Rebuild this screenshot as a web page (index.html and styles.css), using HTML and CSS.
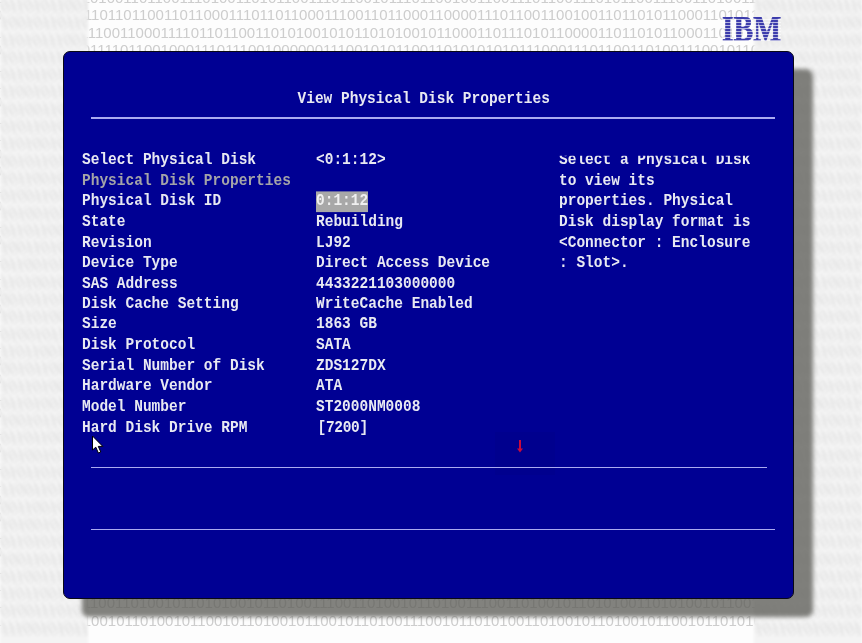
FILE: index.html
```html
<!DOCTYPE html>
<html lang="en">
<head>
<meta charset="utf-8">
<title>View Physical Disk Properties</title>
<link rel="stylesheet" href="styles.css">
</head>
<body>
<div class="screen">
<div class="binary">0110101100111010011011001110100110101100111011001011101100100110011101100111010110011100110100111001
1001011011001101101100110110001110110110001110011011000110000111011001100100110110101100011010110011
1101011100111110011000111101101100110101001010110101001011000110111010110000110110101100011010110100
1011011110000111101100100011101110010000001110010101100110101010101110001110110011010011100101101001
0110110100110110011010011011001011010011011001011001101001101100101101001101011001011010011010110010
1100101101001011011001011010011101100101101001011011001101001011010011011001011010010110110010110100
1010011011001101001011001101100101101001101100101100110100101101100101101001101100101101001011001101
0101101001101100101101001011001101001101100101101001011011001011010010110110011010010110011010011011
1101001011010011011001011001101001011011001101001011001011011001011001101001101100101101001101100101
0010110110010110100110110010110100101100110110010110100110100101101100101101001011001101101001011001
1011001011001101001011011001011010011011001011001101001011001101001101100101101001011011001011010011
0100110110100101100110100110110010110100101101100101100110100101100110110010110100101101001100101101
1010010110110011010010110011011001011010010110011010011011001011001101001101100101101001011001101001
0110110010110100101101100101100110100110110010110100101101100101101001100110100101101100101101001011
1001101001011001101100101101001011011001011001101001011001101101001011001101001011011001011010011001
0110010110110100101100110100101101100101101001101100101100110100101101001101100101101001011001101100
1101001011001101001011011001011001101001011011001011010011011001011001101001011010011011001011001101
0010110110010110100110110010110100110010110110010110100101100110110010110100101101001100101101100101
1011010010110011010010110110010110011010010110110010110100110010110110010110100110110010110011010010
0100101101100101100110100101101100101101001101100101100110100101101100101101001100110100101101100101
1101100101101001100110100101101100101101001011001101100101101001011001101001011011001011010011001101
0010110010110110010110100110011010010110110010110100110110010110011010010110110010110100110110010110
1011010011001011011001011010010110011011001011010010110011010010110110010110011010010110110010110100
0110100110110010110011010010110110010110100110110010110011010010110011011001011010010110110010110011
1001011001101001011011001011001101001011011001011010011001101001011011001011010011011001011001101001
0110110010110100110110010110011010010110110010110100101100110110010110100101100110100101101100101101
1010010110110010110011010010110110010110100110011010010110110010110100101101100110100101100110110010
0101101001011001101101001011001101001011011001011010010110011011001011010011001101001011011001011001
1100110100101101100101101001101100101100110100101100110110010110100101101100101100110100101101100101
0011001011010010110110011010010110011011001011010010110110010110011010010110110010110100110110010110
1010010110011011001011001011010011011001010110101001101100101101101010011101100100110101100110011010
0110101001011011001011010010111001100101101001110110010110101100010110101001011011001010110100110110
1001101100110100110010110101001101000110101010111000111011001010100110101001011100110101001011010100
0110011101110000110110000011101110010000000111001010110011010101010111000110001101010110011010110101
1101100101110110001110110111011000011101100110110011001110011001000111011011011001100111000110101011
0100111010011100110100101101010010110100111001101001011010011100110100101101010011010100101100110101
1110010101101001011010010110010110100101100101101001110010110101001101001011010010110010110101001011</div>
<div class="strip strip-left">01101011001
10010110110
11010111001
10110111100
01101101001
11001011010
10100110110
01011010011
11010010110
00101101100
10110010110
01001101101
10100101101
01101100101
10011010010
01100101101
11010010110
00101101100
10110100101
01001011011
11011001011
00101100101
10110100110
01101001101
10010110011
01101100101
10100101101
01011010010
11001101001
00110010110
10100101100
01101010010
10011011001
01100111011
11011001011
01001110100
11100101011</div>
<div class="strip strip-right">10011101001110
01101101011000
11011010110100
00111001011010
11001011010011
10100101101001
11011001011010
01100101101001
11101001011001
01011001101001
10010110011010
00110010110100
11011001011010
01101001011011
10011010010110
01010110100110
10100101100110
01011010010110
11001011010011
01101100101101
10100101101001
01001011001101
10110110010110
01011010010110
10100101100110
00110100101101
10100110110010
01100110100110
11001011001101
00101100101101
10110100101100
01101001011010
10011011001010
01001101011010
11011001100111
00110100101100
10110101001011</div>
<div class="logo" aria-label="IBM logo"><span class="logo-text">IBM</span></div>
<main class="panel">
<div class="scroll-shade"></div>
<h1 class="title">View Physical Disk Properties</h1>
<hr class="rule rule-wide">
<section class="body">
<div class="rows">
<div class="row"><span>Select Physical Disk</span><span>&lt;0:1:12&gt;</span></div>
<div class="row row-heading"><span>Physical Disk Properties</span></div>
<div class="row"><span>Physical Disk ID</span><span class="selected">0:1:12</span></div>
<div class="row"><span>State</span><span>Rebuilding</span></div>
<div class="row"><span>Revision</span><span>LJ92</span></div>
<div class="row"><span>Device Type</span><span>Direct Access Device</span></div>
<div class="row"><span>SAS Address</span><span>4433221103000000</span></div>
<div class="row"><span>Disk Cache Setting</span><span>WriteCache Enabled</span></div>
<div class="row"><span>Size</span><span>1863 GB</span></div>
<div class="row"><span>Disk Protocol</span><span>SATA</span></div>
<div class="row"><span>Serial Number of Disk</span><span>ZDS127DX</span></div>
<div class="row"><span>Hardware Vendor</span><span>ATA</span></div>
<div class="row"><span>Model Number</span><span>ST2000NM0008</span></div>
<div class="row"><span>Hard Disk Drive RPM</span><span class="bracket">[7200]</span></div>
</div>
<aside class="help"><p class="help-text">Select a Physical Disk to view its properties. Physical Disk display format is &lt;Connector : Enclosure : Slot&gt;.</p></aside>
</section>
<hr class="rule rule-mid">
<hr class="rule rule-wide rule-last">
<svg class="scroll-arrow" width="8" height="13" viewBox="0 0 8 13"><path d="M4 0V11" stroke="#c80a3c" stroke-width="2" fill="none"/><path d="M1 8.5H7L4 12.5Z" fill="#c80a3c"/></svg>
<svg class="cursor" width="14" height="20" viewBox="0 0 14 20"><path d="M1.5 1V15L4.8 12.2L7.4 18L9.8 17L7.3 11.4H11.8Z" fill="#fff" stroke="#000" stroke-width="1"/></svg>
</main>
</div>
</body>
</html>
```
FILE: styles.css
```css
html, body {
  margin: 0;
  padding: 0;
  background: #fff;
}
.screen {
  position: relative;
  width: 862px;
  height: 643px;
  overflow: hidden;
  background: #fdfdfd;
  font-family: "Liberation Mono", monospace;
}
.binary, .strip {
  position: absolute;
  white-space: pre;
  font-family: "Liberation Sans", sans-serif;
  font-size: 15px;
  line-height: 17.3px;
  overflow: hidden;
}
.binary {
  top: -11px;
  left: -14px;
  width: 876px;
  height: 660px;
  color: #cdcdcd;
  filter: blur(.5px);
}
.strip {
  top: -4px;
  height: 650px;
  background: #f4f4f4;
  color: #e6e6e6;
  text-shadow: 2px 3px 0 #e9e9e9, -2px -3px 0 #ececec;
  filter: blur(.8px);
}
.strip-left { left: 0; width: 88px; }
.strip-right { left: 754px; width: 108px; }
.logo {
  position: absolute;
  left: 722px;
  top: 17px;
  width: 59px;
  height: 24px;
  overflow: hidden;
}
.logo::after {
  content: "";
  position: absolute;
  inset: 0;
  background: repeating-linear-gradient(to bottom, transparent 0, transparent 2px, rgba(255, 255, 255, .62) 2px, rgba(255, 255, 255, .62) 3px);
}
.logo-text {
  display: block;
  width: 72px;
  height: 24px;
  font-family: "Liberation Serif", serif;
  font-weight: bold;
  font-size: 36px;
  line-height: 24px;
  color: #3c3cac;
  -webkit-text-stroke: .7px #3c3cac;
  transform: scaleX(.82);
  transform-origin: 0 0;
}
.panel {
  position: absolute;
  left: 63px;
  top: 51px;
  box-sizing: border-box;
  width: 731px;
  height: 548px;
  padding-top: 36px;
  background: #000093;
  border: 1.5px solid #0a0a14;
  border-radius: 7px;
  box-shadow: 19px 18px 4px rgba(95, 95, 90, .78);
  color: #e8e9f2;
  font-size: 14.5px;
  font-weight: bold;
  line-height: 17.93px;
}
.title {
  margin: 0 0 0 233.5px;
  font-size: inherit;
  font-weight: inherit;
  line-height: 20px;
  transform: scaleY(1.15);
  filter: blur(.3px);
}
.rule {
  position: relative;
  height: 1.5px;
  margin: 0 0 0 27px;
  border: 0;
  background: #aaaaf0;
}
.rule-wide { width: 684px; margin-top: 9px; }
.rule-mid { width: 676px; margin-top: 66px; }
.rule-last { margin-top: 60.5px; }
.body {
  display: flex;
  height: 251px;
  margin: 31px 0 0 18px;
  transform: scaleY(1.15);
  transform-origin: 0 0;
  filter: blur(.3px);
}
.rows { width: 477px; }
.row {
  display: grid;
  grid-template-columns: 234px 1fr;
  height: 17.93px;
  white-space: pre;
}
.row-heading { color: #a4a4a8; }
.selected {
  justify-self: start;
  background: #a8a8a8;
  color: #f0f0f0;
}
.bracket {
  padding-left: 1.5px;
  letter-spacing: -.3px;
}
.help {
  width: 194px;
  height: 130px;
  margin-top: 5.2px;
  overflow: hidden;
}
.help-text { margin: -5.2px 0 0; }
.scroll-shade {
  position: absolute;
  left: 431px;
  top: 380px;
  width: 60px;
  height: 43px;
  background: #00008e;
}
.scroll-arrow {
  position: absolute;
  left: 452px;
  top: 388px;
}
.cursor {
  position: absolute;
  left: 26.5px;
  top: 383px;
}
```
